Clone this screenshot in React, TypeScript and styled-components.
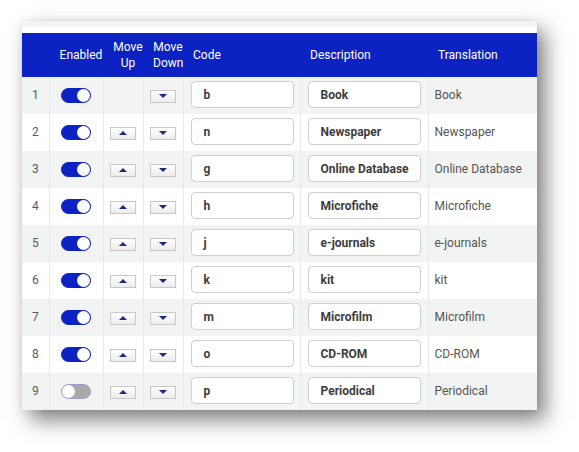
import React from "react";
import styled, { createGlobalStyle } from "styled-components";

const Global = createGlobalStyle`
  html, body { margin: 0; padding: 0; background: #ffffff; }
  body { font-family: Roboto, "Liberation Sans", Arial, sans-serif; }
`;

const Page = styled.div`
  padding: 21px 0 0 22px;
  width: 579px;
  height: 452px;
  box-sizing: border-box;
`;

const Card = styled.div`
  width: 515px;
  background: #ffffff;
  box-shadow: 8px 10px 20px rgba(0, 0, 0, 0.5), 0 0 7px rgba(0, 0, 0, 0.08);
`;

const TopStrip = styled.div`
  height: 6px;
  background: #f4f4f4;
  border-bottom: 6px solid #ffffff;
`;

const Table = styled.table`
  width: 515px;
  border-collapse: collapse;
  table-layout: fixed;
  font-size: 12px;
`;

const HeadRow = styled.tr`
  background: #0c22c3;
  height: 44px;
`;

const Th = styled.th<{ $align?: "left" | "center" }>`
  color: #ffffff;
  font-weight: 400;
  font-size: 12px;
  line-height: 16px;
  padding: 0 0 1px 10px;
  text-align: ${(p) => p.$align ?? "left"};
  vertical-align: middle;
`;

const Row = styled.tr<{ $shade: boolean }>`
  height: 37px;
  background: ${(p) => (p.$shade ? "#f2f3f3" : "#ffffff")};
`;

const Td = styled.td<{ $align?: "left" | "center"; $pad?: number; $lift?: boolean }>`
  padding: 0 0 ${(p) => (p.$lift ? 2 : 0)}px ${(p) => p.$pad ?? 0}px;
  text-align: ${(p) => p.$align ?? "left"};
  vertical-align: middle;
  border-right: 1px solid #e7e8e8;
  color: #555555;
  &:last-child { border-right: none; }
`;

const Num = styled.span`
  color: #5a5a5a;
  font-size: 12px;
`;

const Switch = styled.span<{ $on: boolean }>`
  display: inline-flex;
  box-sizing: border-box;
  width: 30px;
  height: 15px;
  border-radius: 8px;
  padding: 1px;
  background: ${(p) => (p.$on ? "#0c22c3" : "#a9a9a9")};
  border: 1px solid ${(p) => (p.$on ? "#0c22c3" : "#9aa0c8")};
  justify-content: ${(p) => (p.$on ? "flex-end" : "flex-start")};
  align-items: center;
  vertical-align: middle;
`;

const Knob = styled.span`
  width: 13px;
  height: 13px;
  margin: -1px;
  border-radius: 50%;
  background: #ffffff;
`;

const ArrowBtn = styled.span`
  display: inline-flex;
  box-sizing: border-box;
  width: 26px;
  height: 13px;
  border: 1px solid #c8c8c8;
  background: linear-gradient(#ffffff, #ececec);
  align-items: center;
  justify-content: center;
  vertical-align: middle;
`;

const Tri = styled.span<{ $up: boolean }>`
  width: 0;
  height: 0;
  border-left: 4px solid transparent;
  border-right: 4px solid transparent;
  ${(p) =>
    p.$up ? "border-bottom: 4px solid #1b2a86;" : "border-top: 4px solid #1b2a86;"}
`;

const Field = styled.div<{ $w: number }>`
  box-sizing: border-box;
  width: ${(p) => p.$w}px;
  height: 27px;
  border: 1px solid #cfcfcf;
  border-radius: 4px;
  background: #ffffff;
  padding-left: 12px;
  display: flex;
  align-items: center;
  font-weight: 700;
  font-size: 12px;
  color: #3d3d3d;
`;

const rows = [
  { code: "b", desc: "Book", on: true },
  { code: "n", desc: "Newspaper", on: true },
  { code: "g", desc: "Online Database", on: true },
  { code: "h", desc: "Microfiche", on: true },
  { code: "j", desc: "e-journals", on: true },
  { code: "k", desc: "kit", on: true },
  { code: "m", desc: "Microfilm", on: true },
  { code: "o", desc: "CD-ROM", on: true },
  { code: "p", desc: "Periodical", on: false },
];

export default function App() {
  return (
    <Page>
      <Global />
      <Card>
        <TopStrip />
        <Table>
          <colgroup>
            <col style={{ width: 27 }} />
            <col style={{ width: 54 }} />
            <col style={{ width: 40 }} />
            <col style={{ width: 40 }} />
            <col style={{ width: 117 }} />
            <col style={{ width: 128 }} />
            <col style={{ width: 109 }} />
          </colgroup>
          <thead>
            <HeadRow>
              <Th />
              <Th $align="center">Enabled</Th>
              <Th $align="center">Move<br />Up</Th>
              <Th $align="center">Move<br />Down</Th>
              <Th>Code</Th>
              <Th>Description</Th>
              <Th>Translation</Th>
            </HeadRow>
          </thead>
          <tbody>
            {rows.map((r, i) => (
              <Row key={r.code} $shade={i % 2 === 0}>
                <Td $align="center" $lift><Num>{i + 1}</Num></Td>
                <Td $align="center">
                  <Switch $on={r.on}><Knob /></Switch>
                </Td>
                <Td $align="center">
                  {i > 0 && (
                    <ArrowBtn><Tri $up /></ArrowBtn>
                  )}
                </Td>
                <Td $align="center">
                  <ArrowBtn><Tri $up={false} /></ArrowBtn>
                </Td>
                <Td $pad={7} $lift>
                  <Field $w={103}>{r.code}</Field>
                </Td>
                <Td $pad={7} $lift>
                  <Field $w={113}>{r.desc}</Field>
                </Td>
                <Td $pad={6} $lift>{r.desc}</Td>
              </Row>
            ))}
          </tbody>
        </Table>
      </Card>
    </Page>
  );
}
